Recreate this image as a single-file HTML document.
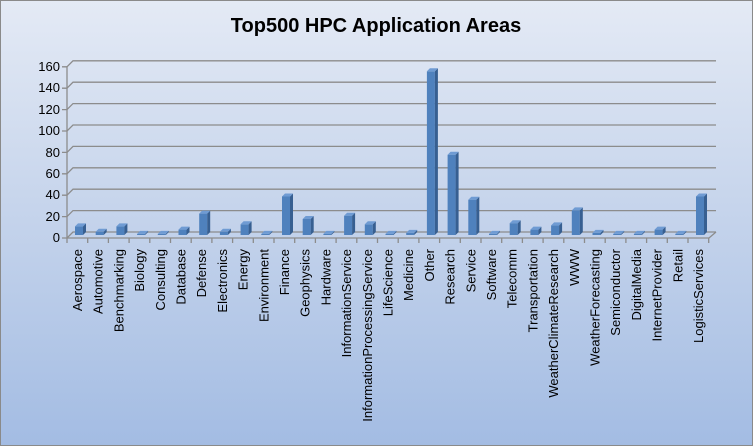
<!DOCTYPE html>
<html><head><meta charset="utf-8"><style>
html,body{margin:0;padding:0;width:753px;height:446px;overflow:hidden}
svg{display:block}
text{font-family:"Liberation Sans",Arial,sans-serif}
</style></head><body>
<svg width="753" height="446" viewBox="0 0 753 446" xmlns="http://www.w3.org/2000/svg">
<defs>
<linearGradient id="bg" x1="0" y1="0" x2="0" y2="1">
<stop offset="0" stop-color="#e4eaf5"/>
<stop offset="0.45" stop-color="#c7d5ec"/>
<stop offset="1" stop-color="#a3bce3"/>
</linearGradient>
</defs>
<rect x="0.5" y="0.5" width="752" height="445" fill="url(#bg)" stroke="#8a8a8a"/>
<text x="376" y="32" text-anchor="middle" font-size="20" font-weight="bold" fill="#000">Top500 HPC Application Areas</text>
<g stroke="#8c8c8c" stroke-width="1.3" fill="none">
<path d="M67 238L73 232H716M67 216.6L73 210.6H716M67 195.2L73 189.2H716M67 173.8L73 167.8H716M67 152.4L73 146.4H716M67 131L73 125H716M67 109.6L73 103.6H716M67 88.2L73 82.2H716M67 66.8L73 60.8H716"/>
<path d="M67 66.8V243M62 238H709L716 232M62 216.6H67M62 195.2H67M62 173.8H67M62 152.4H67M62 131H67M62 109.6H67M62 88.2H67M62 66.8H67"/>
<path d="M87.7 238v5M108.4 238v5M129.1 238v5M149.8 238v5M170.5 238v5M191.2 238v5M211.9 238v5M232.6 238v5M253.3 238v5M274 238v5M294.7 238v5M315.4 238v5M336.1 238v5M356.8 238v5M377.5 238v5M398.2 238v5M418.9 238v5M439.6 238v5M460.3 238v5M481 238v5M501.7 238v5M522.4 238v5M543.1 238v5M563.8 238v5M584.5 238v5M605.2 238v5M625.9 238v5M646.6 238v5M667.3 238v5M688 238v5M708.7 238v5"/>
</g>
<g font-size="13" fill="#000" text-anchor="end">
<text x="60" y="242">0</text><text x="60" y="221">20</text><text x="60" y="199">40</text><text x="60" y="178">60</text><text x="60" y="157">80</text><text x="60" y="135">100</text><text x="60" y="114">120</text><text x="60" y="92">140</text><text x="60" y="71">160</text>
</g>
<g id="bars">
<g transform="translate(75,0)"><rect x="0" y="226.4" width="8" height="8.6" fill="#4f81bd"/><polygon points="8,226.4 11,223.4 11,232 8,235" fill="#375f91"/><polygon points="0,226.4 3,223.4 11,223.4 8,226.4" fill="#6f9bd3"/></g>
<g transform="translate(95.7,0)"><rect x="0" y="231.8" width="8" height="3.2" fill="#4f81bd"/><polygon points="8,231.8 11,228.8 11,232 8,235" fill="#375f91"/><polygon points="0,231.8 3,228.8 11,228.8 8,231.8" fill="#6f9bd3"/></g>
<g transform="translate(116.4,0)"><rect x="0" y="226.4" width="8" height="8.6" fill="#4f81bd"/><polygon points="8,226.4 11,223.4 11,232 8,235" fill="#375f91"/><polygon points="0,226.4 3,223.4 11,223.4 8,226.4" fill="#6f9bd3"/></g>
<g transform="translate(137.1,0)"><rect x="0" y="233.9" width="8" height="1.1" fill="#4f81bd"/><polygon points="8,233.9 11,230.9 11,232 8,235" fill="#375f91"/><polygon points="0,233.9 3,230.9 11,230.9 8,233.9" fill="#6f9bd3"/></g>
<g transform="translate(157.8,0)"><rect x="0" y="233.9" width="8" height="1.1" fill="#4f81bd"/><polygon points="8,233.9 11,230.9 11,232 8,235" fill="#375f91"/><polygon points="0,233.9 3,230.9 11,230.9 8,233.9" fill="#6f9bd3"/></g>
<g transform="translate(178.5,0)"><rect x="0" y="229.6" width="8" height="5.4" fill="#4f81bd"/><polygon points="8,229.6 11,226.6 11,232 8,235" fill="#375f91"/><polygon points="0,229.6 3,226.6 11,226.6 8,229.6" fill="#6f9bd3"/></g>
<g transform="translate(199.2,0)"><rect x="0" y="213.6" width="8" height="21.4" fill="#4f81bd"/><polygon points="8,213.6 11,210.6 11,232 8,235" fill="#375f91"/><polygon points="0,213.6 3,210.6 11,210.6 8,213.6" fill="#6f9bd3"/></g>
<g transform="translate(219.9,0)"><rect x="0" y="231.8" width="8" height="3.2" fill="#4f81bd"/><polygon points="8,231.8 11,228.8 11,232 8,235" fill="#375f91"/><polygon points="0,231.8 3,228.8 11,228.8 8,231.8" fill="#6f9bd3"/></g>
<g transform="translate(240.6,0)"><rect x="0" y="224.3" width="8" height="10.7" fill="#4f81bd"/><polygon points="8,224.3 11,221.3 11,232 8,235" fill="#375f91"/><polygon points="0,224.3 3,221.3 11,221.3 8,224.3" fill="#6f9bd3"/></g>
<g transform="translate(261.3,0)"><rect x="0" y="233.9" width="8" height="1.1" fill="#4f81bd"/><polygon points="8,233.9 11,230.9 11,232 8,235" fill="#375f91"/><polygon points="0,233.9 3,230.9 11,230.9 8,233.9" fill="#6f9bd3"/></g>
<g transform="translate(282,0)"><rect x="0" y="196.5" width="8" height="38.5" fill="#4f81bd"/><polygon points="8,196.5 11,193.5 11,232 8,235" fill="#375f91"/><polygon points="0,196.5 3,193.5 11,193.5 8,196.5" fill="#6f9bd3"/></g>
<g transform="translate(302.7,0)"><rect x="0" y="219" width="8" height="16" fill="#4f81bd"/><polygon points="8,219 11,216 11,232 8,235" fill="#375f91"/><polygon points="0,219 3,216 11,216 8,219" fill="#6f9bd3"/></g>
<g transform="translate(323.4,0)"><rect x="0" y="233.9" width="8" height="1.1" fill="#4f81bd"/><polygon points="8,233.9 11,230.9 11,232 8,235" fill="#375f91"/><polygon points="0,233.9 3,230.9 11,230.9 8,233.9" fill="#6f9bd3"/></g>
<g transform="translate(344.1,0)"><rect x="0" y="215.7" width="8" height="19.3" fill="#4f81bd"/><polygon points="8,215.7 11,212.7 11,232 8,235" fill="#375f91"/><polygon points="0,215.7 3,212.7 11,212.7 8,215.7" fill="#6f9bd3"/></g>
<g transform="translate(364.8,0)"><rect x="0" y="224.3" width="8" height="10.7" fill="#4f81bd"/><polygon points="8,224.3 11,221.3 11,232 8,235" fill="#375f91"/><polygon points="0,224.3 3,221.3 11,221.3 8,224.3" fill="#6f9bd3"/></g>
<g transform="translate(385.5,0)"><rect x="0" y="233.9" width="8" height="1.1" fill="#4f81bd"/><polygon points="8,233.9 11,230.9 11,232 8,235" fill="#375f91"/><polygon points="0,233.9 3,230.9 11,230.9 8,233.9" fill="#6f9bd3"/></g>
<g transform="translate(406.2,0)"><rect x="0" y="232.9" width="8" height="2.1" fill="#4f81bd"/><polygon points="8,232.9 11,229.9 11,232 8,235" fill="#375f91"/><polygon points="0,232.9 3,229.9 11,229.9 8,232.9" fill="#6f9bd3"/></g>
<g transform="translate(426.9,0)"><rect x="0" y="71.3" width="8" height="163.7" fill="#4f81bd"/><polygon points="8,71.3 11,68.3 11,232 8,235" fill="#375f91"/><polygon points="0,71.3 3,68.3 11,68.3 8,71.3" fill="#6f9bd3"/></g>
<g transform="translate(447.6,0)"><rect x="0" y="154.7" width="8" height="80.3" fill="#4f81bd"/><polygon points="8,154.7 11,151.7 11,232 8,235" fill="#375f91"/><polygon points="0,154.7 3,151.7 11,151.7 8,154.7" fill="#6f9bd3"/></g>
<g transform="translate(468.3,0)"><rect x="0" y="199.7" width="8" height="35.3" fill="#4f81bd"/><polygon points="8,199.7 11,196.7 11,232 8,235" fill="#375f91"/><polygon points="0,199.7 3,196.7 11,196.7 8,199.7" fill="#6f9bd3"/></g>
<g transform="translate(489,0)"><rect x="0" y="233.9" width="8" height="1.1" fill="#4f81bd"/><polygon points="8,233.9 11,230.9 11,232 8,235" fill="#375f91"/><polygon points="0,233.9 3,230.9 11,230.9 8,233.9" fill="#6f9bd3"/></g>
<g transform="translate(509.7,0)"><rect x="0" y="223.2" width="8" height="11.8" fill="#4f81bd"/><polygon points="8,223.2 11,220.2 11,232 8,235" fill="#375f91"/><polygon points="0,223.2 3,220.2 11,220.2 8,223.2" fill="#6f9bd3"/></g>
<g transform="translate(530.4,0)"><rect x="0" y="229.6" width="8" height="5.4" fill="#4f81bd"/><polygon points="8,229.6 11,226.6 11,232 8,235" fill="#375f91"/><polygon points="0,229.6 3,226.6 11,226.6 8,229.6" fill="#6f9bd3"/></g>
<g transform="translate(551.1,0)"><rect x="0" y="225.4" width="8" height="9.6" fill="#4f81bd"/><polygon points="8,225.4 11,222.4 11,232 8,235" fill="#375f91"/><polygon points="0,225.4 3,222.4 11,222.4 8,225.4" fill="#6f9bd3"/></g>
<g transform="translate(571.8,0)"><rect x="0" y="210.4" width="8" height="24.6" fill="#4f81bd"/><polygon points="8,210.4 11,207.4 11,232 8,235" fill="#375f91"/><polygon points="0,210.4 3,207.4 11,207.4 8,210.4" fill="#6f9bd3"/></g>
<g transform="translate(592.5,0)"><rect x="0" y="232.9" width="8" height="2.1" fill="#4f81bd"/><polygon points="8,232.9 11,229.9 11,232 8,235" fill="#375f91"/><polygon points="0,232.9 3,229.9 11,229.9 8,232.9" fill="#6f9bd3"/></g>
<g transform="translate(613.2,0)"><rect x="0" y="233.9" width="8" height="1.1" fill="#4f81bd"/><polygon points="8,233.9 11,230.9 11,232 8,235" fill="#375f91"/><polygon points="0,233.9 3,230.9 11,230.9 8,233.9" fill="#6f9bd3"/></g>
<g transform="translate(633.9,0)"><rect x="0" y="233.9" width="8" height="1.1" fill="#4f81bd"/><polygon points="8,233.9 11,230.9 11,232 8,235" fill="#375f91"/><polygon points="0,233.9 3,230.9 11,230.9 8,233.9" fill="#6f9bd3"/></g>
<g transform="translate(654.6,0)"><rect x="0" y="229.6" width="8" height="5.4" fill="#4f81bd"/><polygon points="8,229.6 11,226.6 11,232 8,235" fill="#375f91"/><polygon points="0,229.6 3,226.6 11,226.6 8,229.6" fill="#6f9bd3"/></g>
<g transform="translate(675.3,0)"><rect x="0" y="233.9" width="8" height="1.1" fill="#4f81bd"/><polygon points="8,233.9 11,230.9 11,232 8,235" fill="#375f91"/><polygon points="0,233.9 3,230.9 11,230.9 8,233.9" fill="#6f9bd3"/></g>
<g transform="translate(696,0)"><rect x="0" y="196.5" width="8" height="38.5" fill="#4f81bd"/><polygon points="8,196.5 11,193.5 11,232 8,235" fill="#375f91"/><polygon points="0,196.5 3,193.5 11,193.5 8,196.5" fill="#6f9bd3"/></g>
</g>
<g font-size="13" fill="#000" text-anchor="end">
<text transform="translate(82,249) rotate(-90)">Aerospace</text>
<text transform="translate(102.7,249) rotate(-90)">Automotive</text>
<text transform="translate(123.4,249) rotate(-90)">Benchmarking</text>
<text transform="translate(144.1,249) rotate(-90)">Biology</text>
<text transform="translate(164.8,249) rotate(-90)">Consulting</text>
<text transform="translate(185.5,249) rotate(-90)">Database</text>
<text transform="translate(206.2,249) rotate(-90)">Defense</text>
<text transform="translate(226.9,249) rotate(-90)">Electronics</text>
<text transform="translate(247.6,249) rotate(-90)">Energy</text>
<text transform="translate(268.3,249) rotate(-90)">Environment</text>
<text transform="translate(289,249) rotate(-90)">Finance</text>
<text transform="translate(309.7,249) rotate(-90)">Geophysics</text>
<text transform="translate(330.4,249) rotate(-90)">Hardware</text>
<text transform="translate(351.1,249) rotate(-90)">InformationService</text>
<text transform="translate(371.8,249) rotate(-90)">InformationProcessingService</text>
<text transform="translate(392.5,249) rotate(-90)">LifeScience</text>
<text transform="translate(413.2,249) rotate(-90)">Medicine</text>
<text transform="translate(433.9,249) rotate(-90)">Other</text>
<text transform="translate(454.6,249) rotate(-90)">Research</text>
<text transform="translate(475.3,249) rotate(-90)">Service</text>
<text transform="translate(496,249) rotate(-90)">Software</text>
<text transform="translate(516.7,249) rotate(-90)">Telecomm</text>
<text transform="translate(537.4,249) rotate(-90)">Transportation</text>
<text transform="translate(558.1,249) rotate(-90)">WeatherClimateResearch</text>
<text transform="translate(578.8,249) rotate(-90)">WWW</text>
<text transform="translate(599.5,249) rotate(-90)">WeatherForecasting</text>
<text transform="translate(620.2,249) rotate(-90)">Semiconductor</text>
<text transform="translate(640.9,249) rotate(-90)">DigitalMedia</text>
<text transform="translate(661.6,249) rotate(-90)">InternetProvider</text>
<text transform="translate(682.3,249) rotate(-90)">Retail</text>
<text transform="translate(703,249) rotate(-90)">LogisticServices</text>
</g>
</svg>
</body></html>
